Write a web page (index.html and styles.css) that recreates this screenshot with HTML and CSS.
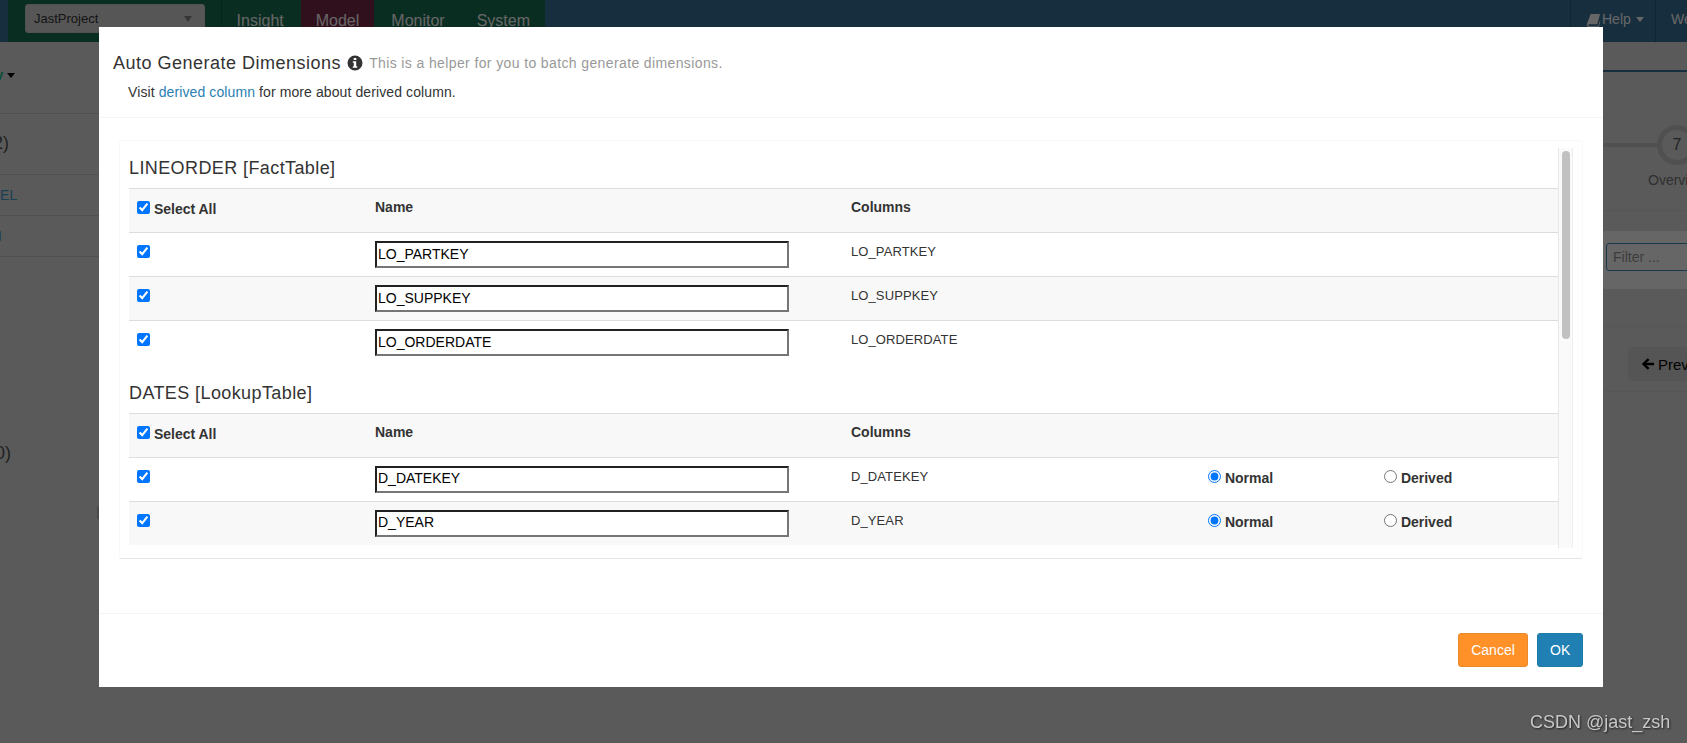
FILE: index.html
```html
<!DOCTYPE html>
<html lang="en">
<head>
    <meta charset="UTF-8">
    <meta name="viewport" content="width=device-width, initial-scale=1.0">
    <title>Auto Generate Dimensions</title>
    <link rel="stylesheet" href="styles.css">
</head>
<body>
    <header class="navbar">
        <div class="nav-main">
            <div class="project-select">
                <span>JastProject</span>
                <span class="select-arrow"></span>
            </div>
            <nav class="nav-tabs">
                <a class="nav-tab">Insight</a>
                <a class="nav-tab active">Model</a>
                <a class="nav-tab">Monitor</a>
                <a class="nav-tab">System</a>
            </nav>
        </div>
        <div class="nav-right">
            <a class="nav-help">
                <svg class="book-icon" viewBox="0 0 16 16"><path d="M5 1h10l-3 11H3.500C2.800 12 2.400 12.600 2.600 13.200 2.800 13.700 3.200 14 3.800 14H13l1.500-5.500.8.500L13.600 15.200H3.500C2 15.200 .8 14 .8 12.600c0-.4.1-.8.2-1.200z" fill-rule="evenodd"/></svg>
                Help <span class="caret"></span>
            </a>
            <a class="nav-user">We</a>
        </div>
    </header>

    <div class="page">
        <aside class="sidebar">
            <div class="side-top">y<span class="caret dark"></span></div>
            <h3 class="side-title">2)</h3>
            <a class="side-link">DEL</a>
            <a class="side-link thin">I</a>
            <h3 class="side-title low">0)</h3>
            <div class="side-mark"></div>
        </aside>
        <section class="steps">
            <div class="steps-top"></div>
            <div class="step-row">
                <div class="step-line"></div>
                <div class="step-circle">7</div>
            </div>
            <div class="step-label">Overvi</div>
            <div class="filter-band"><input class="filter-input" placeholder="Filter ..."></div>
            <div class="prev-row">
                <a class="prev-btn">
                    <svg class="arrow-icon" viewBox="0 0 14 14"><path d="M6.800 1.200 8.500 2.900 5.400 5.800H13V8.200H5.400L8.500 11.100 6.800 12.800 .8 7z"/></svg>
                    Prev
                </a>
            </div>
        </section>
    </div>

    <div class="backdrop"></div>

    <div class="modal">
        <div class="modal-header">
            <h4 class="modal-title">
                Auto Generate Dimensions
                <svg class="info-icon" viewBox="0 0 16 16"><path fill-rule="evenodd" d="M8 .5a7.500 7.500 0 1 1 0 15 7.500 7.500 0 0 1 0-15zM6.700 2.900v2.100h2.600V2.900zM5.800 6.300v1.500h1v3.500h-1v1.500h4.400v-1.500h-1V6.300z"/></svg>
                <small class="modal-hint">This is a helper for you to batch generate dimensions.</small>
            </h4>
            <p class="modal-note">Visit <a class="link">derived column</a> for more about derived column.</p>
        </div>

        <div class="modal-body">
            <div class="box">
                <div class="box-scroll">
                    <h5 class="table-title">LINEORDER [FactTable]</h5>
                    <table class="dim-table">
                        <colgroup><col class="col-check"><col class="col-name"><col class="col-columns"><col class="col-normal"><col class="col-derived"></colgroup>
                        <thead>
                            <tr>
                                <th><input type="checkbox" checked> <span class="select-all">Select All</span></th>
                                <th>Name</th>
                                <th colspan="3">Columns</th>
                            </tr>
                        </thead>
                        <tbody>
                            <tr>
                                <td><input type="checkbox" checked></td>
                                <td><input class="name-input" value="LO_PARTKEY"></td>
                                <td colspan="3">LO_PARTKEY</td>
                            </tr>
                            <tr>
                                <td><input type="checkbox" checked></td>
                                <td><input class="name-input" value="LO_SUPPKEY"></td>
                                <td colspan="3">LO_SUPPKEY</td>
                            </tr>
                            <tr>
                                <td><input type="checkbox" checked></td>
                                <td><input class="name-input" value="LO_ORDERDATE"></td>
                                <td colspan="3">LO_ORDERDATE</td>
                            </tr>
                        </tbody>
                    </table>

                    <h5 class="table-title">DATES [LookupTable]</h5>
                    <table class="dim-table">
                        <colgroup><col class="col-check"><col class="col-name"><col class="col-columns"><col class="col-normal"><col class="col-derived"></colgroup>
                        <thead>
                            <tr>
                                <th><input type="checkbox" checked> <span class="select-all">Select All</span></th>
                                <th>Name</th>
                                <th colspan="3">Columns</th>
                            </tr>
                        </thead>
                        <tbody>
                            <tr>
                                <td><input type="checkbox" checked></td>
                                <td><input class="name-input" value="D_DATEKEY"></td>
                                <td>D_DATEKEY</td>
                                <td><label class="radio-label"><input type="radio" name="d1" checked> Normal</label></td>
                                <td><label class="radio-label"><input type="radio" name="d1"> Derived</label></td>
                            </tr>
                            <tr>
                                <td><input type="checkbox" checked></td>
                                <td><input class="name-input" value="D_YEAR"></td>
                                <td>D_YEAR</td>
                                <td><label class="radio-label"><input type="radio" name="d2" checked> Normal</label></td>
                                <td><label class="radio-label"><input type="radio" name="d2"> Derived</label></td>
                            </tr>
                        </tbody>
                    </table>
                </div>
                <!-- native scrollbars don't show in the screenshot, so the bar is drawn -->
                <div class="scroll-track"><div class="scroll-thumb"></div></div>
            </div>
        </div>

        <div class="modal-footer">
            <button class="btn btn-cancel">Cancel</button>
            <button class="btn btn-ok">OK</button>
        </div>
    </div>

    <div class="watermark">CSDN @jast_zsh</div>
</body>
</html>
```

FILE: styles.css
```css
* {
    margin: 0;
    padding: 0;
    box-sizing: border-box;
    font-family: "Liberation Sans", Arial, sans-serif;
}

html, body {
    height: 100%;
    overflow: hidden;
}

body {
    background-color: #e2e2e2;
    color: #333333;
    font-size: 14px;
}

/* Page behind the dialog */
.navbar {
    height: 42px;
    background-color: #37739b;
    display: flex;
    justify-content: space-between;
}

.nav-main {
    margin-left: 8px;
    width: 537px;
    background-color: #1b7055;
    display: flex;
    align-items: flex-start;
    padding-left: 17px;
}

.project-select {
    width: 180px;
    height: 29px;
    margin-top: 4px;
    padding: 0 12px 0 8px;
    font-size: 13px;
    background-color: #d8d8d8;
    border: 1px solid #cccccc;
    border-radius: 3px;
    display: flex;
    align-items: center;
    justify-content: space-between;
}

.select-arrow {
    border-top: 6px solid #888888;
    border-left: 4px solid transparent;
    border-right: 4px solid transparent;
}

.nav-tabs {
    display: flex;
    gap: 2px;
    height: 100%;
    margin-left: 16px;
    border-left: 1px solid #155a44;
}

.nav-tab {
    color: #ffffff;
    font-size: 16px;
    padding: 12px 15px 0;
}

.nav-tab.active {
    background-color: #7a2a4d;
}

.nav-right {
    display: flex;
}

.nav-help, .nav-user {
    color: #ffffff;
    font-size: 14px;
    padding-top: 11px;
    border-left: 1px solid #255f7f;
}

.nav-help {
    width: 85px;
    padding-left: 15px;
    display: flex;
    gap: 1px;
    align-items: flex-start;
}

.nav-user {
    width: 32px;
    padding-left: 15px;
    white-space: nowrap;
}

.book-icon {
    width: 15px;
    height: 15px;
    fill: #ffffff;
    margin-top: 2px;
}

.caret {
    display: inline-block;
    border-top: 5px solid #ffffff;
    border-left: 4.500px solid transparent;
    border-right: 4.500px solid transparent;
    margin: 6px 0 0 4px;
}

.caret.dark {
    border-top-color: #000000;
    margin: 0 0 2px 4px;
    vertical-align: middle;
}

.page {
    display: flex;
    justify-content: space-between;
    height: 701px;
}

.sidebar {
    width: 99px;
    overflow: hidden;
    white-space: nowrap;
}

.side-top {
    height: 72px;
    padding-top: 24px;
    font-size: 15px;
    font-weight: bold;
    color: #26c08c;
    text-indent: -5px;
    border-bottom: 1px solid #c8c8c8;
}

.side-title {
    height: 61px;
    padding-top: 19px;
    font-size: 18px;
    font-weight: normal;
    color: #555555;
    text-indent: -7px;
    border-bottom: 1px solid #c8c8c8;
}

.side-title.low {
    height: auto;
    padding-top: 186px;
    text-indent: -5px;
    border-bottom: none;
}

.side-mark {
    width: 2px;
    height: 13px;
    margin: 42px 0 0 97px;
    background-color: #bbbbbb;
}

.side-link {
    display: block;
    height: 41px;
    padding-top: 12px;
    color: #449fd0;
    font-size: 14px;
    text-indent: -10px;
    border-bottom: 1px solid #c8c8c8;
}

.side-link.thin {
    text-indent: -2px;
}

.steps {
    width: 84px;
    white-space: nowrap;
    overflow: hidden;
}

.steps-top {
    height: 30px;
    border-bottom: 2px solid #37739b;
}

.step-row {
    height: 50px;
    margin-top: 48px;
    display: flex;
    align-items: center;
}

.step-line {
    flex-shrink: 0;
    width: 54px;
    height: 4px;
    background-color: #c8c8c8;
}

.step-circle {
    flex-shrink: 0;
    width: 40px;
    height: 40px;
    border: 5px solid #c8c8c8;
    border-radius: 50%;
    display: flex;
    align-items: center;
    justify-content: center;
    font-size: 16px;
    color: #555555;
}

.step-label {
    margin-top: 2px;
    padding-left: 45px;
    height: 39px;
    font-size: 14px;
    color: #777777;
    border-bottom: 1px solid #d6d6d6;
}

.filter-band {
    margin-top: 20px;
    height: 58px;
    padding: 12px 0 0 3px;
    background-color: #ffffff;
}

.filter-input {
    width: 120px;
    height: 28px;
    padding-left: 6px;
    font-size: 14px;
    border: 1px solid #3c8dbc;
    border-radius: 3px;
}

.filter-input::placeholder {
    color: #999999;
}

.prev-row {
    margin-top: 37px;
    height: 66px;
    padding: 20px 0 0 25px;
    border-top: 1px solid #d6d6d6;
    border-bottom: 1px solid #d6d6d6;
}

.prev-btn {
    display: flex;
    width: 80px;
    height: 34px;
    align-items: center;
    gap: 3px;
    padding-left: 13px;
    font-size: 15px;
    background-color: #d4d4d4;
    border-radius: 3px;
    color: #000000;
}

.arrow-icon {
    width: 14px;
    height: 14px;
    fill: #000000;
}

.backdrop {
    position: fixed;
    top: 0;
    left: 0;
    right: 0;
    bottom: 0;
    background-color: rgba(0, 0, 0, 0.6);
}

/* Dialog */
.modal {
    position: fixed;
    top: 27px;
    left: 99px;
    width: 1504px;
    height: 660px;
    background-color: #ffffff;
    display: flex;
    flex-direction: column;
}

.modal-header {
    height: 91px;
    padding: 25px 14px 0;
    border-bottom: 1px solid #f4f4f4;
}

.modal-title {
    font-size: 18px;
    font-weight: normal;
    line-height: 22px;
    letter-spacing: 0.5px;
    display: flex;
    align-items: center;
}

.info-icon {
    width: 16px;
    height: 16px;
    margin-left: 6px;
    fill: #333333;
}

.modal-hint {
    font-size: 14px;
    color: #999999;
    margin-left: 6px;
    letter-spacing: 0.38px;
}

.modal-note {
    margin-top: 9px;
    margin-left: 15px;
    font-size: 14px;
    line-height: 18px;
    letter-spacing: 0.1px;
}

.link {
    color: #2a80b3;
}

.modal-body {
    flex: 1;
    padding: 22px 20px 0;
}

.box {
    height: 419px;
    padding: 7px 9px 10px 9px;
    display: flex;
    border: 1px solid #f9f9f9;
    border-bottom-color: #e4e4e4;
    border-radius: 3px;
}

.box-scroll {
    width: 1429px;
    height: 400px;
    overflow: hidden;
}

.scroll-track {
    width: 15px;
    height: 400px;
    background-color: #fafafa;
    border-left: 1px solid #e8e8e8;
    border-right: 1px solid #eeeeee;
}

.scroll-thumb {
    width: 8px;
    height: 188px;
    margin: 3px 0 0 3px;
    background-color: #c1c1c1;
    border-radius: 4px;
}

.table-title {
    font-size: 18px;
    font-weight: normal;
    line-height: 20px;
    letter-spacing: 0.4px;
    padding-top: 10px;
    margin-bottom: 10px;
}

.dim-table {
    width: 1429px;
    table-layout: fixed;
    border-collapse: collapse;
    margin-bottom: 8px;
}

.col-check { width: 238px; }
.col-name { width: 476px; }
.col-columns { width: 357px; }
.col-normal { width: 176px; }
.col-derived { width: 182px; }

.dim-table th, .dim-table td {
    height: 44px;
    padding: 8px;
    text-align: left;
    vertical-align: top;
    border-top: 1px solid #dddddd;
    font-size: 13px;
    line-height: 18px;
    letter-spacing: 0.1px;
}

.dim-table th {
    padding-top: 9px;
    font-size: 14px;
    letter-spacing: 0;
}

.dim-table td:nth-child(3) {
    padding-top: 10px;
}

.dim-table thead tr, .dim-table tbody tr:nth-child(even) {
    background-color: #f8f8f8;
}

.dim-table input[type="checkbox"] {
    margin: 4px 0 0;
    width: 13px;
    height: 13px;
    vertical-align: top;
}

.dim-table th input[type="checkbox"] {
    margin-top: 3px;
}

.dim-table input[type="radio"] {
    margin: 1px 0 0;
    width: 13px;
    height: 13px;
    vertical-align: top;
}

.select-all {
    display: inline-block;
    margin-top: 2px;
}

.name-input {
    display: block;
    width: 414px;
    height: 27px;
    padding: 0 1px 2px;
    font-size: 14px;
    letter-spacing: 0;
    color: #000000;
    border: 2px inset #767676;
}

.radio-label {
    font-size: 14px;
    font-weight: bold;
    letter-spacing: 0;
    line-height: 18px;
    display: inline-block;
    padding-top: 3px;
}

.modal-footer {
    height: 74px;
    padding: 19px 20px 0;
    border-top: 1px solid #f4f4f4;
    display: flex;
    justify-content: flex-end;
    gap: 9px;
}

.btn {
    height: 34px;
    padding: 0 12px;
    font-size: 14px;
    color: #ffffff;
    border-radius: 3px;
    cursor: pointer;
}

.btn-cancel {
    width: 70px;
    background-color: #ff9128;
    border: 1px solid #e8892a;
}

.btn-ok {
    width: 46px;
    background-color: #2080b4;
    border: 1px solid #1f7ba8;
}

.watermark {
    position: fixed;
    top: 711px;
    left: 1530px;
    font-size: 18px;
    line-height: 22px;
    color: #c8c8c8;
    text-shadow: 1px 1px 2px #222222;
}
```
